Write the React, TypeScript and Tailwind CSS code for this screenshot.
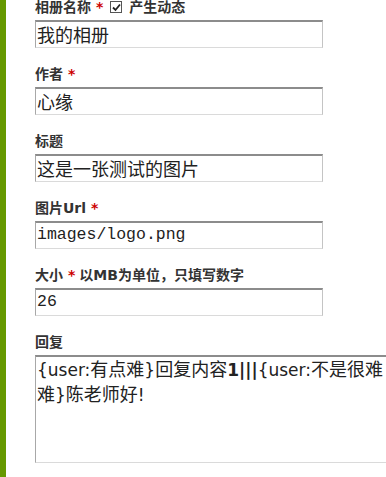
import { ReactNode } from "react";

const labelFont = { fontFamily: '"DejaVu Sans", "Noto Sans CJK SC", sans-serif' };

function Star() {
  return <span className="text-[#cc0000] ml-[5px] mr-[4px]">*</span>;
}

function Label({ children, first }: { children: ReactNode; first?: boolean }) {
  return (
    <div
      className={`flex items-center h-[14px] text-[14px] leading-[14px] font-bold text-[#333] whitespace-nowrap ${
        first ? "" : "mt-[19px]"
      }`}
      style={labelFont}
    >
      {children}
    </div>
  );
}

function Field({ value, mono }: { value: string; mono?: boolean }) {
  return (
    <div
      className={`mt-[6px] w-[288px] h-[28px] flex items-center pl-[1px] bg-white border-t-2 border-t-[#8c8c8c] border-l border-l-[#a8a8a8] border-r border-r-[#c4c4c4] border-b border-b-[#dadada] text-[#222] whitespace-nowrap ${
        mono
          ? "text-[16.5px] font-['Liberation_Mono',monospace]"
          : "text-[18px] font-['Noto_Sans_CJK_SC',sans-serif]"
      }`}
    >
      {value}
    </div>
  );
}

const cjk = "font-['Noto_Sans_CJK_SC',sans-serif] text-[18px]";
const lat = "font-['DejaVu_Sans','Noto_Sans_CJK_SC',sans-serif] text-[17px]";

export default function App() {
  return (
    <div className="flex h-[477px] w-[386px] overflow-hidden bg-white">
      <div className="w-[6px] shrink-0 bg-[#669900]" />
      <div className="flex-1 pl-[29px] flex flex-col">
        <Label first>
          相册名称
          <Star />
          <span className="ml-[3px] mr-[7px] w-[12px] h-[12px] border border-[#555] bg-white flex items-center justify-center">
            <svg width="9" height="9" viewBox="0 0 9 9">
              <path d="M1 4.5 L3.5 7 L8 1.5" fill="none" stroke="#222" strokeWidth="1.8" />
            </svg>
          </span>
          产生动态
        </Label>
        <Field value="我的相册" />

        <Label>
          作者
          <Star />
        </Label>
        <Field value="心缘" />

        <Label>标题</Label>
        <Field value="这是一张测试的图片" />

        <Label>
          图片Url
          <Star />
        </Label>
        <Field value="images/logo.png" mono />

        <Label>
          大小
          <Star />
          以MB为单位，只填写数字
        </Label>
        <Field value="26" mono />

        <Label>回复</Label>
        <div className="mt-[6px] w-[400px] h-[108px] shrink-0 pl-[1px] bg-white border-t-2 border-t-[#8c8c8c] border-l border-l-[#a8a8a8] border-b border-b-[#dadada] text-[#222] leading-[23px]">
          <div className="whitespace-nowrap">
            <span className={lat}>{"{user:"}</span>
            <span className={cjk}>有点难</span>
            <span className={lat}>{"}"}</span>
            <span className={cjk}>回复内容</span>
            <span className={`${lat} font-bold`}>1|||</span>
            <span className={lat}>{"{user:"}</span>
            <span className={cjk}>不是很难</span>
          </div>
          <div className="whitespace-nowrap">
            <span className={cjk}>难</span>
            <span className={lat}>{"}"}</span>
            <span className={cjk}>陈老师好</span>
            <span className={lat}>!</span>
          </div>
        </div>
      </div>
    </div>
  );
}
